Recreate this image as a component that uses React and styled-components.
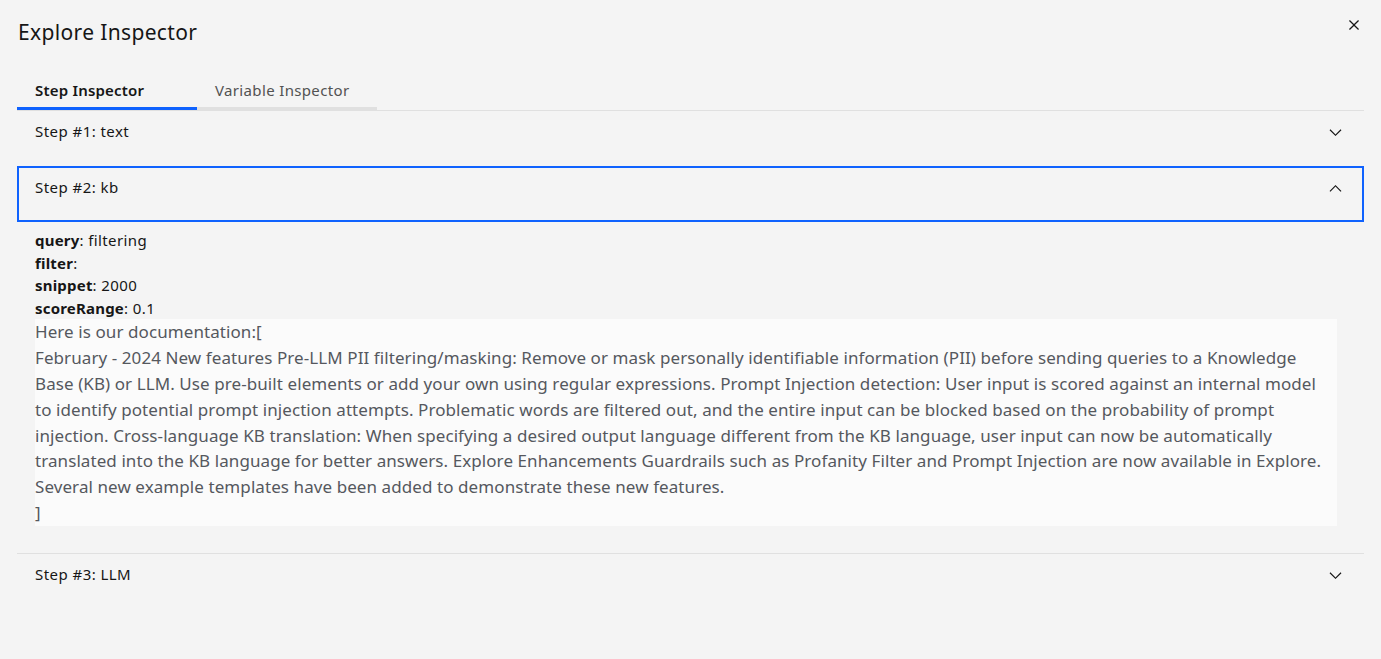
import React, { useState } from 'react';
import styled, { createGlobalStyle } from 'styled-components';

const GlobalStyle = createGlobalStyle`
  body {
    margin: 0;
    background: #f4f4f4;
    font-family: "Noto Sans", "Open Sans", sans-serif;
    color: #161616;
  }
`;

const Modal = styled.div`
  min-height: 659px;
  box-sizing: border-box;
  padding: 0 17px;
  background: #f4f4f4;
`;

const Header = styled.div`
  display: flex;
  justify-content: space-between;
  align-items: flex-start;
  height: 73px;
`;

const Title = styled.h2`
  margin: 18px 0 0 1px;
  font-size: 21px;
  line-height: 28px;
  letter-spacing: 0.35px;
  font-weight: 400;
  color: #161616;
`;

const CloseButton = styled.button`
  display: flex;
  align-items: center;
  justify-content: center;
  width: 32px;
  height: 32px;
  margin: 9px -6px 0 0;
  padding: 0;
  border: none;
  background: transparent;
  color: #161616;
  cursor: pointer;
`;

const TabList = styled.div`
  display: flex;
`;

const Tab = styled.button`
  width: 180px;
  height: 37px;
  padding: 0 18px 1px;
  box-sizing: border-box;
  text-align: left;
  border: none;
  border-bottom: 3px solid ${(p) => (p.$active ? '#0f62fe' : '#e0e0e0')};
  background: transparent;
  font-family: inherit;
  font-size: 15px;
  letter-spacing: ${(p) => (p.$active ? '0.2px' : '0.35px')};
  font-weight: ${(p) => (p.$active ? 600 : 400)};
  color: ${(p) => (p.$active ? '#161616' : '#525252')};
  cursor: pointer;
`;

const Accordion = styled.div`
  display: flex;
  flex-direction: column;
`;

const Item = styled.div`
  border-top: 1px solid #e0e0e0;
`;

const Heading = styled.button`
  display: flex;
  justify-content: space-between;
  align-items: flex-start;
  width: 100%;
  height: ${(p) => (p.$focused ? '56px' : '55px')};
  margin-top: ${(p) => (p.$focused ? '-1px' : '0')};
  padding: ${(p) => (p.$focused ? '10px 19px 0 18px' : '9px 19px 0 18px')};
  box-sizing: border-box;
  border: none;
  outline: ${(p) => (p.$focused ? '2px solid #0f62fe' : 'none')};
  outline-offset: -2px;
  background: transparent;
  font-family: inherit;
  font-size: 15px;
  letter-spacing: 0.45px;
  line-height: 22px;
  color: #161616;
  text-align: left;
  cursor: pointer;
`;

const Chevron = styled.svg`
  width: 19px;
  height: 19px;
  margin-top: 3px;
  fill: #161616;
`;

const Content = styled.div`
  padding: 7px 27px 27px 18px;
`;

const Field = styled.div`
  font-size: 15px;
  letter-spacing: 0.4px;
  line-height: 22.6px;
  color: #161616;
`;

const Key = styled.span`
  font-weight: 700;
  letter-spacing: 0.2px;
`;

const DocBox = styled.div`
  background: #fbfbfb;
  font-size: 17px;
  letter-spacing: 0.08px;
  line-height: 25.8px;
  color: #55585e;
  white-space: pre-wrap;
`;

const ChevronIcon = ({ up }) => (
  <Chevron viewBox="0 0 32 32">
    {up ? (
      <path d="M16 10l10 10-1.4 1.4L16 12.8l-8.6 8.6L6 20z" />
    ) : (
      <path d="M16 22L6 12l1.4-1.4L16 19.2l8.6-8.6L26 12z" />
    )}
  </Chevron>
);

const docText =
  'Here is our documentation:[\n' +
  'February - 2024 New features Pre-LLM PII filtering/masking: Remove or mask personally identifiable information (PII) before sending queries to a Knowledge Base (KB) or LLM. Use pre-built elements or add your own using regular expressions. Prompt Injection detection: User input is scored against an internal model to identify potential prompt injection attempts. Problematic words are filtered out, and the entire input can be blocked based on the probability of prompt injection. Cross-language KB translation: When specifying a desired output language different from the KB language, user input can now be automatically translated into the KB language for better answers. Explore Enhancements Guardrails such as Profanity Filter and Prompt Injection are now available in Explore. Several new example templates have been added to demonstrate these new features.\n' +
  ']';

const fields = [
  { key: 'query', value: 'filtering' },
  { key: 'filter', value: '' },
  { key: 'snippet', value: '2000' },
  { key: 'scoreRange', value: '0.1' },
];

const App = () => {
  const [tab, setTab] = useState(0);
  const [open, setOpen] = useState(2);

  const steps = ['Step #1: text', 'Step #2: kb', 'Step #3: LLM'];

  return (
    <>
      <GlobalStyle />
      <Modal>
        <Header>
          <Title>Explore Inspector</Title>
          <CloseButton aria-label="Close">
            <svg width="20" height="20" viewBox="0 0 32 32" fill="#161616">
              <path d="M17.4141 16L24 9.4141 22.5859 8 16 14.5859 9.4143 8 8 9.4141 14.5859 16 8 22.5859 9.4143 24 16 17.4141 22.5859 24 24 22.5859 17.4141 16z" />
            </svg>
          </CloseButton>
        </Header>

        <TabList>
          <Tab $active={tab === 0} onClick={() => setTab(0)}>Step Inspector</Tab>
          <Tab $active={tab === 1} onClick={() => setTab(1)}>Variable Inspector</Tab>
        </TabList>

        <Accordion>
          {steps.map((label, i) => {
            const isOpen = open === i + 1;
            return (
              <Item key={label}>
                <Heading $focused={isOpen} onClick={() => setOpen(isOpen ? 0 : i + 1)}>
                  <span>{label}</span>
                  <ChevronIcon up={isOpen} />
                </Heading>
                {isOpen && (
                  <Content>
                    {fields.map((f) => (
                      <Field key={f.key}>
                        <Key>{f.key}</Key>: {f.value}
                      </Field>
                    ))}
                    <DocBox>{docText}</DocBox>
                  </Content>
                )}
              </Item>
            );
          })}
        </Accordion>
      </Modal>
    </>
  );
};

export default App;
